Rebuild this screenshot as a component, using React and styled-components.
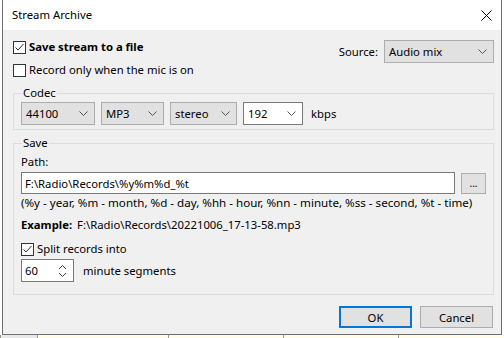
import React from "react";
import styled, { createGlobalStyle } from "styled-components";

const Global = createGlobalStyle`
  html, body { margin: 0; padding: 0; background: #ffffff; }
  body { font-family: "Noto Sans", "Liberation Sans", sans-serif; font-size: 11.3px; color: #000; }
`;

const Screen = styled.div`
  width: 504px;
  height: 338px;
  overflow: hidden;
  background: #ffffff;
`;

const Window = styled.div`
  margin-left: 2px;
  width: 500px;
  height: 335px;
  box-sizing: border-box;
  border: 1px solid #6f6f6f;
  border-top: none;
  background: #f0f0f0;
  display: flex;
  flex-direction: column;
  overflow: hidden;
`;

const TitleBar = styled.div`
  height: 30px;
  background: #ffffff;
  display: flex;
  align-items: center;
  justify-content: space-between;
  padding: 0 9px 0 9px;
  flex-shrink: 0;
`;

const Title = styled.span`
  line-height: 16px;
`;

const Body = styled.div`
  flex: 1;
  padding: 10px 7px 0 10px;
  display: flex;
  flex-direction: column;
`;

const TopRow = styled.div`
  display: flex;
  justify-content: space-between;
  align-items: flex-start;
  height: 23px;
`;

const CheckLine = styled.label`
  display: flex;
  align-items: center;
  gap: 3px;
  height: 14px;
  line-height: 14px;
  white-space: nowrap;
  font-weight: ${(p) => (p.$bold ? 700 : 400)};
  margin-top: ${(p) => p.$top || 0}px;
`;

const Box = styled.span`
  width: 13px;
  height: 13px;
  box-sizing: border-box;
  border: 1px solid #333333;
  background: #ffffff;
  display: inline-flex;
  align-items: center;
  justify-content: center;
  flex-shrink: 0;
`;

const SourceWrap = styled.div`
  display: flex;
  align-items: center;
  gap: 6px;
`;

const Select = styled.div`
  width: ${(p) => p.$w}px;
  height: 23px;
  box-sizing: border-box;
  border: 1px solid ${(p) => (p.$edit ? "#7a7a7a" : "#adadad")};
  background: ${(p) => (p.$edit ? "#ffffff" : "#e1e1e1")};
  display: flex;
  align-items: center;
  justify-content: space-between;
  padding: 0 6px 0 4px;
  line-height: 16px;
`;

const Group = styled.fieldset`
  margin: ${(p) => p.$top}px 0 0 0;
  padding: 0 7px ${(p) => p.$bottom}px 7px;
  border: 1px solid #dcdcdc;
  min-width: 0;
`;

const Legend = styled.legend`
  margin-left: 1px;
  padding: 0 1px;
  line-height: 16px;
`;

const CodecRow = styled.div`
  display: flex;
  align-items: center;
  gap: 6px;
  margin-top: 1px;
`;

const Unit = styled.span`
  margin-left: 2px;
`;

const Line = styled.div`
  line-height: 16px;
  white-space: nowrap;
  margin-top: ${(p) => p.$top || 0}px;
`;

const Hint = styled(Line)`
  font-size: 11.6px;
`;

const PathRow = styled.div`
  display: flex;
  align-items: center;
  gap: 6px;
  margin-top: 2px;
`;

const TextBox = styled.div`
  width: ${(p) => p.$w}px;
  height: ${(p) => p.$h || 22}px;
  box-sizing: border-box;
  border: 1px solid #7a7a7a;
  background: #ffffff;
  display: flex;
  align-items: center;
  justify-content: space-between;
  padding: 0 6px 0 3px;
`;

const SmallButton = styled.div`
  width: 25px;
  height: 21px;
  box-sizing: border-box;
  border: 1px solid #adadad;
  background: #e1e1e1;
  display: flex;
  align-items: center;
  justify-content: center;
  font-size: 10px;
`;

const Example = styled.div`
  line-height: 16px;
  margin-top: 6px;
  white-space: nowrap;
  b { margin-right: 5px; }
`;

const SpinRow = styled.div`
  display: flex;
  align-items: center;
  gap: 9px;
  margin-top: 3px;
`;

const Footer = styled.div`
  display: flex;
  justify-content: flex-end;
  gap: 8px;
  margin-top: 11px;
  padding-right: 1px;
`;

const Button = styled.div`
  width: 73px;
  height: 22px;
  box-sizing: border-box;
  border: ${(p) => (p.$default ? "2px solid #0078d7" : "1px solid #adadad")};
  background: #e1e1e1;
  display: flex;
  align-items: center;
  justify-content: center;
`;

const Backdrop = styled.div`
  height: 3px;
  background: #fffdea;
  display: grid;
  grid-template-columns: 37px 131px 115px 115px 1fr;
`;

const Cell = styled.div`
  border-left: 1px solid #9a9a90;
  background: ${(p) => (p.$gray ? "#e8e8e8" : "transparent")};
`;

const Check = () => (
  <svg width="11" height="11" viewBox="0 0 11 11">
    <polyline points="1.5,5.5 4,8 9.5,2" fill="none" stroke="#333" strokeWidth="1" />
  </svg>
);

const Chevron = () => (
  <svg width="9" height="5" viewBox="0 0 9 5">
    <polyline points="0.5,0.5 4.5,4.5 8.5,0.5" fill="none" stroke="#555" strokeWidth="1" />
  </svg>
);

const Spin = () => (
  <svg width="9" height="14" viewBox="0 0 9 14">
    <polyline points="1,5 4.5,1.5 8,5" fill="none" stroke="#333" strokeWidth="1" />
    <polyline points="1,9 4.5,12.5 8,9" fill="none" stroke="#333" strokeWidth="1" />
  </svg>
);

const Close = () => (
  <svg width="11" height="11" viewBox="0 0 11 11">
    <path d="M0.5 0.5 L10.5 10.5 M10.5 0.5 L0.5 10.5" stroke="#000" strokeWidth="1" />
  </svg>
);

const Checkbox = ({ checked, bold, top, children }) => (
  <CheckLine $bold={bold} $top={top}>
    <Box>{checked && <Check />}</Box>
    {children}
  </CheckLine>
);

const Combo = ({ w, edit, children }) => (
  <Select $w={w} $edit={edit}>
    <span>{children}</span>
    <Chevron />
  </Select>
);

export default function App() {
  return (
    <Screen>
      <Global />
      <Window>
        <TitleBar>
          <Title>Stream Archive</Title>
          <Close />
        </TitleBar>
        <Body>
          <TopRow>
            <Checkbox checked bold>Save stream to a file</Checkbox>
            <SourceWrap>
              <span>Source:</span>
              <Combo w={110}>Audio mix</Combo>
            </SourceWrap>
          </TopRow>
          <Checkbox>Record only when the mic is on</Checkbox>

          <Group $top={8} $bottom={4}>
            <Legend>Codec</Legend>
            <CodecRow>
              <Combo w={74}>44100</Combo>
              <Combo w={63}>MP3</Combo>
              <Combo w={67}>stereo</Combo>
              <Combo w={60} edit>192</Combo>
              <Unit>kbps</Unit>
            </CodecRow>
          </Group>

          <Group $top={5} $bottom={12}>
            <Legend>Save</Legend>
            <Line $top={3}>Path:</Line>
            <PathRow>
              <TextBox $w={434}>F:\Radio\Records\%y%m%d_%t</TextBox>
              <SmallButton>...</SmallButton>
            </PathRow>
            <Hint $top={1}>(%y - year, %m - month, %d - day, %hh - hour, %nn - minute, %ss - second, %t - time)</Hint>
            <Example>
              <b>Example:</b>F:\Radio\Records\20221006_17-13-58.mp3
            </Example>
            <Checkbox checked top={9}>Split records into</Checkbox>
            <SpinRow>
              <TextBox $w={53} $h={23}>
                <span>60</span>
                <Spin />
              </TextBox>
              <span>minute segments</span>
            </SpinRow>
          </Group>

          <Footer>
            <Button $default>OK</Button>
            <Button>Cancel</Button>
          </Footer>
        </Body>
      </Window>
      <Backdrop>
        <Cell $gray />
        <Cell />
        <Cell />
        <Cell />
        <Cell />
      </Backdrop>
    </Screen>
  );
}
